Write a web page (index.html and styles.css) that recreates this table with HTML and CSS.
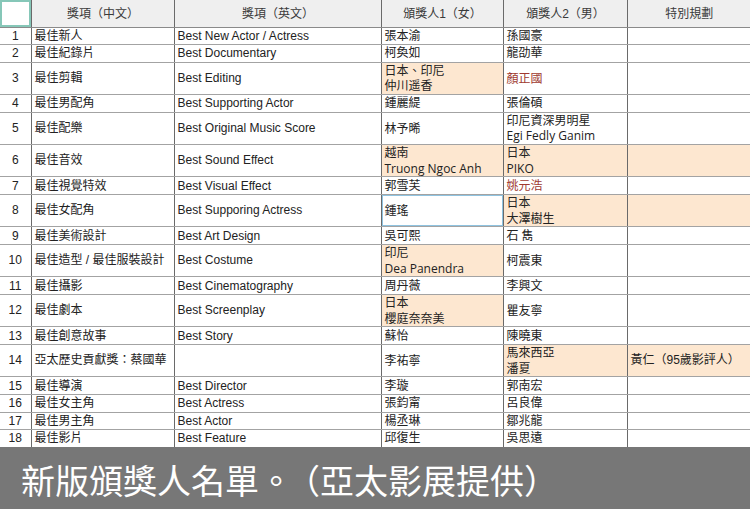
FILE: index.html
```html
<!DOCTYPE html>
<html lang="zh-Hant">
<head>
<meta charset="utf-8">
<title>頒獎人名單</title>
<link rel="stylesheet" href="styles.css">
</head>
<body>
<div class="sheet">
<table class="grid">
<colgroup>
<col class="c-no"><col class="c-zh"><col class="c-en"><col class="c-p1"><col class="c-p2"><col class="c-sp">
</colgroup>
<thead>
<tr class="head">
<th class="corner"></th><th>獎項（中文）</th><th>獎項（英文）</th><th>頒獎人1（女）</th><th>頒獎人2（男）</th><th>特別規劃</th>
</tr>
</thead>
<tbody>
<tr class="s"><td class="no">1</td><td>最佳新人</td><td class="en">Best New Actor / Actress</td><td class="p">張本渝</td><td class="p">孫國豪</td><td></td></tr>
<tr class="s"><td class="no">2</td><td>最佳紀錄片</td><td class="en">Best Documentary</td><td class="p">柯奐如</td><td class="p">龍劭華</td><td></td></tr>
<tr class="d"><td class="no">3</td><td>最佳剪輯</td><td class="en">Best Editing</td><td class="p hl">日本、印尼<br>仲川遥香</td><td class="p red">顏正國</td><td></td></tr>
<tr class="s"><td class="no">4</td><td>最佳男配角</td><td class="en">Best Supporting Actor</td><td class="p">鍾麗緹</td><td class="p">張倫碩</td><td></td></tr>
<tr class="d"><td class="no">5</td><td>最佳配樂</td><td class="en">Best Original Music Score</td><td class="p">林予晞</td><td class="p">印尼資深男明星<br>Egi Fedly Ganim</td><td></td></tr>
<tr class="d"><td class="no">6</td><td>最佳音效</td><td class="en">Best Sound Effect</td><td class="p hl">越南<br>Truong Ngoc Anh</td><td class="p hl">日本<br>PIKO</td><td class="hl"></td></tr>
<tr class="s"><td class="no">7</td><td>最佳視覺特效</td><td class="en">Best Visual Effect</td><td class="p">郭雪芙</td><td class="p red">姚元浩</td><td></td></tr>
<tr class="d"><td class="no">8</td><td>最佳女配角</td><td class="en">Best Supporing Actress</td><td class="p sel">鍾瑤</td><td class="p hl">日本<br>大澤樹生</td><td class="hl"></td></tr>
<tr class="s"><td class="no">9</td><td>最佳美術設計</td><td class="en">Best Art Design</td><td class="p">吳可熙</td><td class="p">石 雋</td><td></td></tr>
<tr class="d"><td class="no">10</td><td>最佳造型 / 最佳服裝設計</td><td class="en">Best Costume</td><td class="p hl">印尼<br>Dea Panendra</td><td class="p">柯震東</td><td></td></tr>
<tr class="s"><td class="no">11</td><td>最佳攝影</td><td class="en">Best Cinematography</td><td class="p">周丹薇</td><td class="p">李興文</td><td></td></tr>
<tr class="d"><td class="no">12</td><td>最佳劇本</td><td class="en">Best Screenplay</td><td class="p hl">日本<br>櫻庭奈奈美</td><td class="p">瞿友寧</td><td></td></tr>
<tr class="s"><td class="no">13</td><td>最佳創意故事</td><td class="en">Best Story</td><td class="p">蘇怡</td><td class="p">陳曉東</td><td></td></tr>
<tr class="d"><td class="no">14</td><td>亞太歷史貢獻獎：蔡國華</td><td class="en"></td><td class="p">李祐寧</td><td class="p hl">馬來西亞<br>潘夏</td><td class="hl sp">黃仁（95歲影評人）</td></tr>
<tr class="s"><td class="no">15</td><td>最佳導演</td><td class="en">Best Director</td><td class="p">李璇</td><td class="p">郭南宏</td><td></td></tr>
<tr class="s"><td class="no">16</td><td>最佳女主角</td><td class="en">Best Actress</td><td class="p">張鈞甯</td><td class="p">呂良偉</td><td></td></tr>
<tr class="s"><td class="no">17</td><td>最佳男主角</td><td class="en">Best Actor</td><td class="p">楊丞琳</td><td class="p">鄒兆龍</td><td></td></tr>
<tr class="s"><td class="no">18</td><td>最佳影片</td><td class="en">Best Feature</td><td class="p">邱復生</td><td class="p">吳思遠</td><td></td></tr>
</tbody>
</table>
</div>
<div class="caption">新版頒獎人名單<span class="stop">。</span>（亞太影展提供）</div>
</body>
</html>
```
FILE: styles.css
```css
html, body {
  margin: 0;
  padding: 0;
  background: #ffffff;
}
body {
  width: 750px;
  height: 509px;
  overflow: hidden;
  font-family: "Liberation Sans", "Noto Sans CJK TC", sans-serif;
  color: #222;
}
.sheet {
  height: 447px;
  overflow: hidden;
}
.grid {
  width: 750px;
  table-layout: fixed;
  border-collapse: collapse;
  font-size: 12px;
}
.c-no { width: 31px; }
.c-zh { width: 143px; }
.c-en { width: 207px; }
.c-p1 { width: 122px; }
.c-p2 { width: 124px; }
.c-sp { width: 123px; }

.grid th,
.grid td {
  padding: 0 2px 0 3px;
  border-top: 1px solid #a3a3a3;
  border-bottom: 1px solid #a3a3a3;
  border-left: 1px solid #6a6a6a;
  border-right: 1px solid #6a6a6a;
  vertical-align: middle;
  white-space: nowrap;
  overflow: hidden;
  line-height: 15px;
}
.grid tr > :first-child { border-left: none; }
.grid tr > :last-child { border-right: none; }

.head { height: 27px; }
.head th {
  background: #efefef;
  font-weight: normal;
  color: #3a3a3a;
  text-align: center;
  border-top: none;
  border-bottom: 1px solid #8a8a8a;
  padding-top: 3px;
}
.head th.corner {
  background: #fff;
  box-shadow: inset 0 0 0 2px #86c7b8;
}

.s { height: 17.6px; }
.d { height: 32.4px; }
.s td { line-height: 14px; }
.d td { line-height: 15.5px; }

.no {
  text-align: center;
  font-size: 12px;
}
.grid td.no { padding-left: 0; padding-right: 0; }
.en { padding-left: 2px; }
.p {
  font-family: "Open Sans", "Noto Sans CJK TC", sans-serif;
  padding-left: 2px;
}
.sp { padding-left: 2px; }
.hl { background: #fde7d0; }
.red { color: #a03a30; }
.sel {
  box-shadow: inset 0 0 0 1px #8fc3e0;
}

.caption {
  height: 59px;
  padding-top: 3px;
  background: #777777;
  color: #ffffff;
  font-family: "Noto Sans CJK TC", sans-serif;
  font-size: 34px;
  line-height: 59px;
  padding-left: 21px;
  white-space: nowrap;
}
.stop {
  margin-right: 10px;
}
```
